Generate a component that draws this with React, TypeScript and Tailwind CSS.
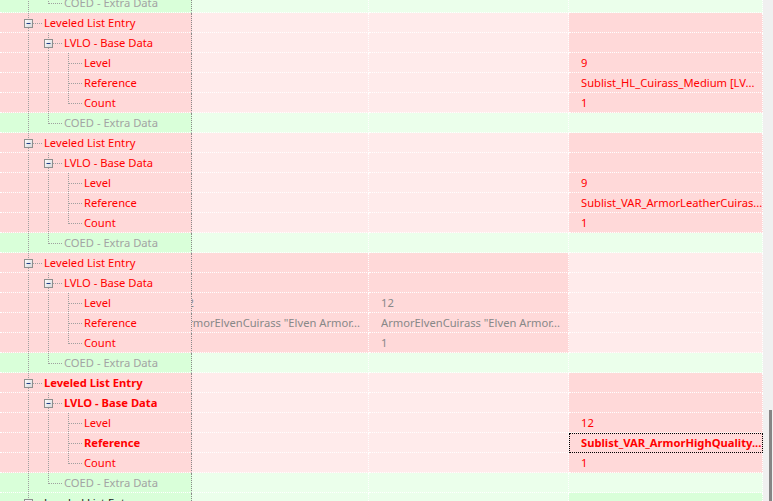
import React from "react";

type Cell = { text?: string; gray?: boolean; bold?: boolean; focus?: boolean };

type Row = {
  label: string;
  level: number;
  box?: boolean;
  last?: boolean;
  tone: "red" | "gray" | "dark";
  bold?: boolean;
  bg: [string, string, string, string];
  cells: [Cell, Cell, Cell];
};

const P = "bg-[#ffd9d9]";
const LP = "bg-[#ffebeb]";
const G = "bg-[#d9ffd9]";
const LG = "bg-[#ebffeb]";

const coed = (): Row => ({
  label: "COED - Extra Data",
  level: 1,
  last: true,
  tone: "gray",
  bg: [G, LG, LG, LG],
  cells: [{}, {}, {}],
});

const entry = (ref: string): Row[] => [
  { label: "Leveled List Entry", level: 0, box: true, tone: "red", bg: [P, LP, LP, P], cells: [{}, {}, {}] },
  { label: "LVLO - Base Data", level: 1, box: true, tone: "red", bg: [P, LP, LP, P], cells: [{}, {}, {}] },
  { label: "Level", level: 2, tone: "red", bg: [P, LP, LP, P], cells: [{}, {}, { text: "9" }] },
  { label: "Reference", level: 2, tone: "red", bg: [P, LP, LP, P], cells: [{}, {}, { text: ref }] },
  { label: "Count", level: 2, last: true, tone: "red", bg: [P, LP, LP, P], cells: [{}, {}, { text: "1" }] },
];

const elven = 'ArmorElvenCuirass "Elven Armor...';

const rows: Row[] = [
  coed(),
  ...entry("Sublist_HL_Cuirass_Medium [LV..."),
  coed(),
  ...entry("Sublist_VAR_ArmorLeatherCuiras..."),
  coed(),
  { label: "Leveled List Entry", level: 0, box: true, tone: "red", bg: [P, P, P, LP], cells: [{}, {}, {}] },
  { label: "LVLO - Base Data", level: 1, box: true, tone: "red", bg: [P, P, P, LP], cells: [{}, {}, {}] },
  { label: "Level", level: 2, tone: "red", bg: [P, P, P, LP], cells: [{ text: "12", gray: true }, { text: "12", gray: true }, {}] },
  { label: "Reference", level: 2, tone: "red", bg: [P, P, P, LP], cells: [{ text: elven, gray: true }, { text: elven, gray: true }, {}] },
  { label: "Count", level: 2, last: true, tone: "red", bg: [P, P, P, LP], cells: [{ text: "1", gray: true }, { text: "1", gray: true }, {}] },
  coed(),
  { label: "Leveled List Entry", level: 0, box: true, bold: true, tone: "red", bg: [P, LP, LP, P], cells: [{}, {}, {}] },
  { label: "LVLO - Base Data", level: 1, box: true, bold: true, tone: "red", bg: [P, LP, LP, P], cells: [{}, {}, {}] },
  { label: "Level", level: 2, tone: "red", bg: [P, LP, LP, P], cells: [{}, {}, { text: "12" }] },
  { label: "Reference", level: 2, bold: true, tone: "red", bg: [P, LP, LP, P], cells: [{}, {}, { text: "Sublist_VAR_ArmorHighQuality...", bold: true, focus: true }] },
  { label: "Count", level: 2, last: true, tone: "red", bg: [P, LP, LP, P], cells: [{}, {}, { text: "1" }] },
  coed(),
  { label: "Leveled List Entry", level: 0, box: true, tone: "dark", bg: [G, LG, LG, G], cells: [{}, {}, {}] },
];

const LINE = "#a0a0a0";

const Guide = () => (
  <svg width="20" height="20" className="shrink-0">
    <line x1="10.5" y1="0" x2="10.5" y2="20" stroke={LINE} strokeDasharray="1 1" />
  </svg>
);

const Connector = ({ box, last }: { box?: boolean; last?: boolean }) => (
  <svg width="26" height="20" className="shrink-0">
    {box ? (
      <>
        <line x1="10.5" y1="0" x2="10.5" y2="6" stroke={LINE} strokeDasharray="1 1" />
        {!last && <line x1="10.5" y1="15" x2="10.5" y2="20" stroke={LINE} strokeDasharray="1 1" />}
        <line x1="15" y1="10.5" x2="24" y2="10.5" stroke={LINE} strokeDasharray="1 1" />
        <defs>
          <linearGradient id="bx" x1="0" y1="0" x2="1" y2="1">
            <stop offset="0" stopColor="#ffffff" />
            <stop offset="1" stopColor="#d6d6d6" />
          </linearGradient>
        </defs>
        <rect x="6.5" y="6.5" width="8" height="8" fill="url(#bx)" stroke="#8e8f8f" />
        <line x1="8.5" y1="10.5" x2="12.5" y2="10.5" stroke="#233e88" />
      </>
    ) : (
      <>
        <line x1="10.5" y1="0" x2="10.5" y2={last ? 11 : 20} stroke={LINE} strokeDasharray="1 1" />
        <line x1="11" y1="10.5" x2="24" y2="10.5" stroke={LINE} strokeDasharray="1 1" />
      </>
    )}
  </svg>
);

const toneClass = {
  red: "text-[#ff0000]",
  gray: "text-[#a3a3a3]",
  dark: "text-[#1a1a1a]",
};

const Value = ({ cell }: { cell: Cell }) => (
  <span
    className={`whitespace-nowrap ${cell.gray ? "text-[#888888]" : "text-[#ff0000]"} ${
      cell.bold ? "font-bold" : ""
    }`}
  >
    {cell.text}
  </span>
);

const TreeRow = ({ row }: { row: Row }) => {
  const [c2, c3, c4] = row.cells;
  return (
    <div className="flex h-[20px]">
      <div
        className={`flex w-[192px] shrink-0 items-center overflow-hidden border-r border-b border-dotted border-r-[#8a8a8a] border-b-white pl-[18px] ${row.bg[0]}`}
      >
        {Array.from({ length: row.level }).map((_, i) => (
          <Guide key={i} />
        ))}
        <Connector box={row.box} last={row.last} />
        <span
          className={`whitespace-nowrap leading-[19px] ${toneClass[row.tone]} ${row.bold ? "font-bold" : ""}`}
        >
          {row.label}
        </span>
      </div>
      <div
        className={`flex w-[177px] shrink-0 items-center overflow-hidden border-r border-b border-dotted border-white ${row.bg[1]}`}
      >
        <div className="ml-[-11px] w-[184px] shrink-0 overflow-hidden leading-[19px]">
          <Value cell={c2} />
        </div>
      </div>
      <div
        className={`flex w-[200px] shrink-0 items-center overflow-hidden border-r border-b border-dotted border-white pl-[12px] ${row.bg[2]}`}
      >
        <div className="overflow-hidden leading-[19px]">
          <Value cell={c3} />
        </div>
      </div>
      <div
        className={`flex w-[194px] shrink-0 items-center overflow-hidden border-r border-b border-dotted border-white pl-[12px] ${row.bg[3]} ${
          c4.focus ? "outline outline-1 outline-dotted outline-black -outline-offset-1" : ""
        }`}
      >
        <div className="overflow-hidden leading-[19px]">
          <Value cell={c4} />
        </div>
      </div>
    </div>
  );
};

export default function App() {
  return (
    <div className="flex h-[501px] w-[773px] overflow-hidden bg-white font-['Noto_Sans',sans-serif] text-[11.2px]">
      <div className="w-[763px] shrink-0">
        <div className="mt-[-7px] flex flex-col">
          {rows.map((row, i) => (
            <TreeRow key={i} row={row} />
          ))}
        </div>
      </div>
      <div className="flex w-[10px] shrink-0 flex-col bg-[#f0f0f0]">
        <div className="h-[410px] shrink-0" />
        <div className="ml-[6px] w-[3px] flex-1 bg-[#858585]" />
      </div>
    </div>
  );
}
